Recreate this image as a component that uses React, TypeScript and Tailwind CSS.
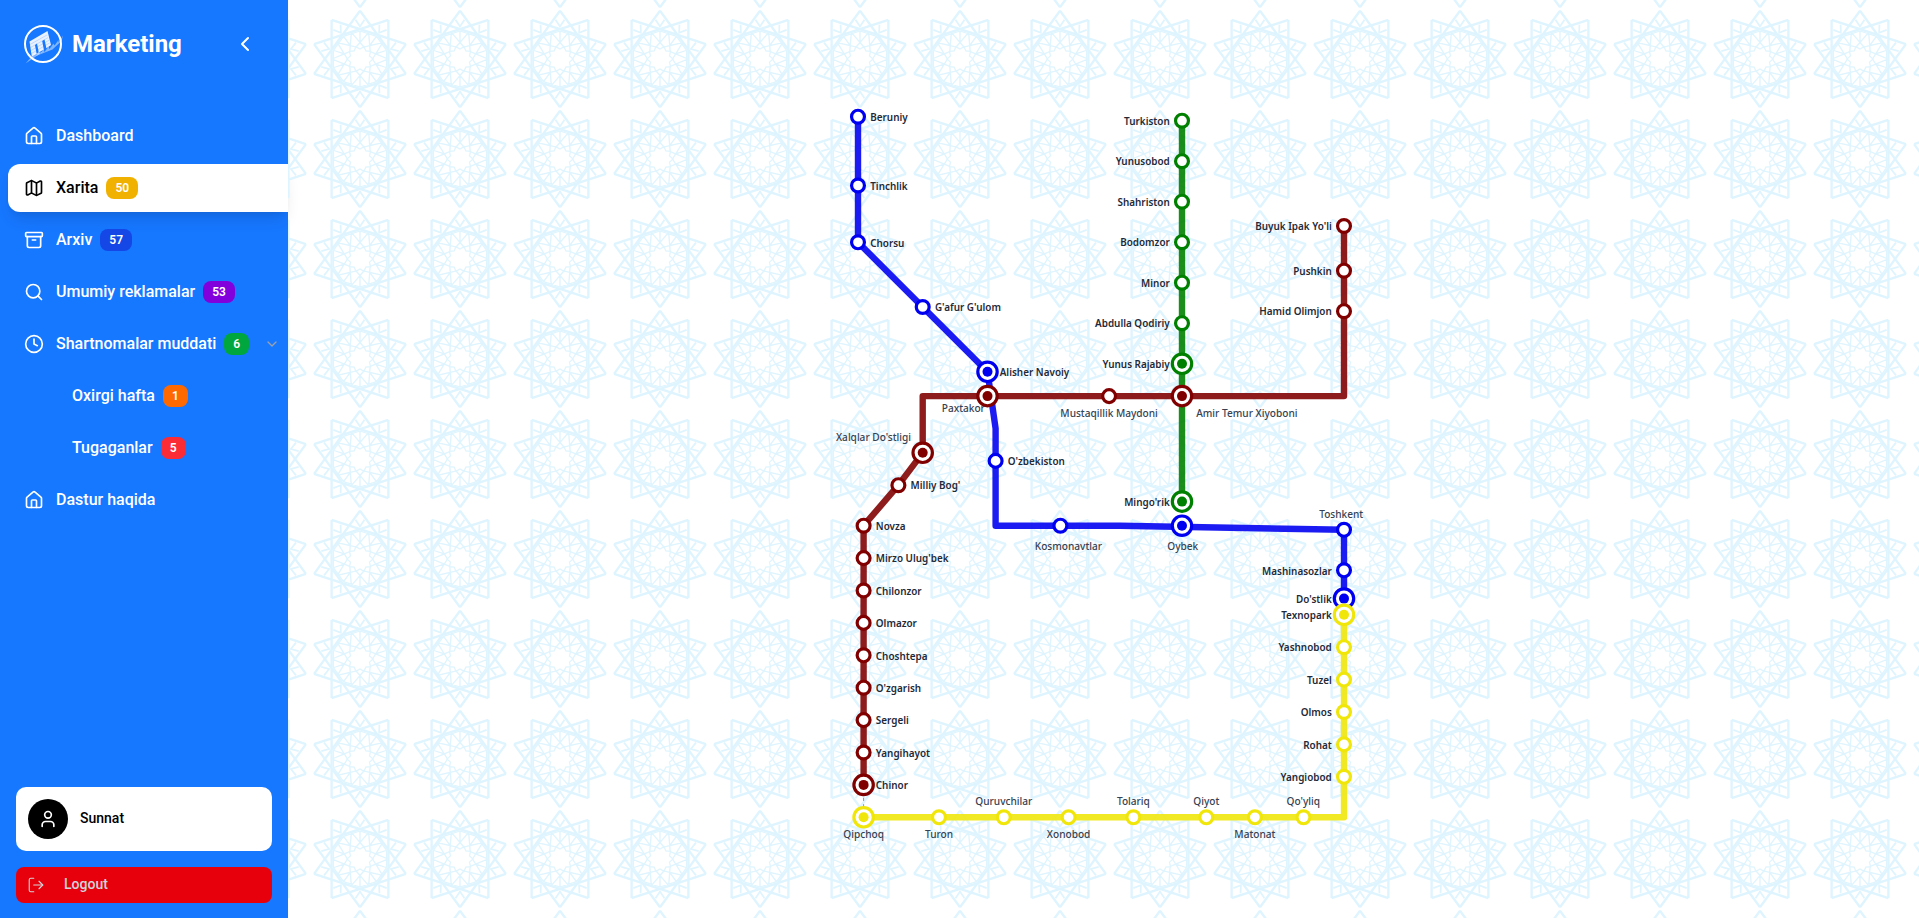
import type { ReactNode } from "react";
import { Archive, ChevronDown, ChevronLeft, Clock, House, LogOut, Map, Search, User } from "lucide-react";

const BLUE = "#0000f0";
const GREEN = "#008000";
const RED = "#800000";
const YELLOW = "#f0e60a";

type Side = "left" | "right";
type Station = {
  x: number;
  y: number;
  name: string;
  color: string;
  big?: boolean;
  side?: Side;
  label?: [number, number];
};

const stations: Station[] = [
  { x: 1182, y: 120.7, name: "Turkiston", color: GREEN, side: "left" },
  { x: 1182, y: 161.2, name: "Yunusobod", color: GREEN, side: "left" },
  { x: 1182, y: 201.7, name: "Shahriston", color: GREEN, side: "left" },
  { x: 1182, y: 242.2, name: "Bodomzor", color: GREEN, side: "left" },
  { x: 1182, y: 282.7, name: "Minor", color: GREEN, side: "left" },
  { x: 1182, y: 323.2, name: "Abdulla Qodiriy", color: GREEN, side: "left" },
  { x: 1182, y: 363.8, name: "Yunus Rajabiy", color: GREEN, side: "left", big: true },
  { x: 1182, y: 501.6, name: "Mingo'rik", color: GREEN, side: "left", big: true },
  { x: 858, y: 116.7, name: "Beruniy", color: BLUE, side: "right" },
  { x: 858, y: 185.5, name: "Tinchlik", color: BLUE, side: "right" },
  { x: 858, y: 242.3, name: "Chorsu", color: BLUE, side: "right" },
  { x: 922.7, y: 307, name: "G'afur G'ulom", color: BLUE, side: "right" },
  { x: 987.5, y: 371.8, name: "Alisher Navoiy", color: BLUE, side: "right", big: true },
  { x: 995.6, y: 460.9, name: "O'zbekiston", color: BLUE, side: "right" },
  { x: 1060.4, y: 525.7, name: "Kosmonavtlar", color: BLUE, label: [1068.4, 549.8] },
  { x: 1182, y: 525.7, name: "Oybek", color: BLUE, big: true, label: [1182.7, 549.8] },
  { x: 1344, y: 529.8, name: "Toshkent", color: BLUE, label: [1341.2, 517.6] },
  { x: 1344, y: 570.3, name: "Mashinasozlar", color: BLUE, side: "left" },
  { x: 1344, y: 598.6, name: "Do'stlik", color: BLUE, side: "left", big: true },
  { x: 1344, y: 226, name: "Buyuk Ipak Yo'li", color: RED, side: "left" },
  { x: 1344, y: 270.7, name: "Pushkin", color: RED, side: "left" },
  { x: 1344, y: 311.2, name: "Hamid Olimjon", color: RED, side: "left" },
  { x: 1182, y: 396.1, name: "Amir Temur Xiyoboni", color: RED, big: true, label: [1246.8, 416.5] },
  { x: 1109.1, y: 396.1, name: "Mustaqillik Maydoni", color: RED, label: [1109.1, 416.5] },
  { x: 987.5, y: 396.1, name: "Paxtakor", color: RED, big: true, label: [963.3, 412.4] },
  { x: 922.7, y: 452.8, name: "Xalqlar Do'stligi", color: RED, big: true, label: [873.5, 440.6] },
  { x: 898.4, y: 485.2, name: "Milliy Bog'", color: RED, side: "right" },
  { x: 863.6, y: 525.7, name: "Novza", color: RED, side: "right" },
  { x: 863.6, y: 558.1, name: "Mirzo Ulug'bek", color: RED, side: "right" },
  { x: 863.6, y: 590.5, name: "Chilonzor", color: RED, side: "right" },
  { x: 863.6, y: 622.9, name: "Olmazor", color: RED, side: "right" },
  { x: 863.6, y: 655.3, name: "Choshtepa", color: RED, side: "right" },
  { x: 863.6, y: 687.7, name: "O'zgarish", color: RED, side: "right" },
  { x: 863.6, y: 720.1, name: "Sergeli", color: RED, side: "right" },
  { x: 863.6, y: 752.5, name: "Yangihayot", color: RED, side: "right" },
  { x: 863.6, y: 784.9, name: "Chinor", color: RED, side: "right", big: true },
  { x: 1344, y: 614.8, name: "Texnopark", color: YELLOW, side: "left", big: true },
  { x: 1344, y: 647.2, name: "Yashnobod", color: YELLOW, side: "left" },
  { x: 1344, y: 679.6, name: "Tuzel", color: YELLOW, side: "left" },
  { x: 1344, y: 712, name: "Olmos", color: YELLOW, side: "left" },
  { x: 1344, y: 744.4, name: "Rohat", color: YELLOW, side: "left" },
  { x: 1344, y: 776.8, name: "Yangiobod", color: YELLOW, side: "left" },
  { x: 1303.5, y: 817.3, name: "Qo'yliq", color: YELLOW, label: [1303.3, 805] },
  { x: 1254.9, y: 817.3, name: "Matonat", color: YELLOW, label: [1254.9, 837.5] },
  { x: 1206.3, y: 817.3, name: "Qiyot", color: YELLOW, label: [1206.3, 805] },
  { x: 1133.4, y: 817.3, name: "Tolariq", color: YELLOW, label: [1133.4, 805] },
  { x: 1068.6, y: 817.3, name: "Xonobod", color: YELLOW, label: [1068.6, 837.5] },
  { x: 1003.8, y: 817.3, name: "Quruvchilar", color: YELLOW, label: [1003.8, 805] },
  { x: 939, y: 817.3, name: "Turon", color: YELLOW, label: [939, 837.5] },
  { x: 863.6, y: 817.3, name: "Qipchoq", color: YELLOW, big: true, label: [863.6, 837.5] },
];

const lines: [string, string][] = [
  [GREEN, "M1182 120.7V501.6"],
  [BLUE, "M858 116.7V242.3L987.5 371.8L995.6 428.5V525.7H1120L1344 529.8V598.6"],
  [RED, "M1344 226V396.1H922.7V452.8L898.4 485.2L863.6 525.7V784.9"],
  [YELLOW, "M1344 614.8V817.3H863.6"],
];

const polar = (r: number, deg: number) => {
  const a = (deg * Math.PI) / 180;
  return `${(r * Math.sin(a)).toFixed(2)} ${(-r * Math.cos(a)).toFixed(2)}`;
};

const tenfold = Array.from({ length: 10 }, (_, i) => i * 36);

/* Ten-pointed girih star, repeated every 100px. */
const outerStar = tenfold.map((a) => `M${polar(48.3, a)}L${polar(48.3, a + 108)}`).join("");
const tips = tenfold
  .map((a) => `M${polar(39.5, a - 6.5)}L${polar(32.5, a)}L${polar(39.5, a + 6.5)}`)
  .join("");
const petals = tenfold
  .map(
    (a) =>
      `M${polar(28, a - 18)}L${polar(16.5, a)}L${polar(28, a + 18)}` +
      `M${polar(16.5, a)}L${polar(27.5, a)}` +
      `M${polar(28, a)}L${polar(28, a + 36)}` +
      `M${polar(16.5, a)}L${polar(12.6, a + 18)}L${polar(16.5, a + 36)}`,
  )
  .join("");
const hole = `M${tenfold.map((a) => `${polar(10, a)}L${polar(13, a + 18)}`).join("L")}Z`;

function MetroMap() {
  return (
    <svg viewBox="288 0 1631 918" className="block h-full w-full">
      <defs>
        <pattern id="girih" x="310" y="9" width="100" height="100" patternUnits="userSpaceOnUse">
          <g transform="translate(50 50)" fill="none" stroke="#def4fe">
            <path d={petals} strokeWidth="1.3" />
            <path d={tips} strokeWidth="1.7" />
            <path d={outerStar} strokeWidth="2.3" />
            <path d={hole} fill="#ffffff" strokeWidth="1.2" />
          </g>
        </pattern>
      </defs>
      <rect x="288" y="0" width="1631" height="918" fill="url(#girih)" />
      <path d="M863.6 785V817" stroke="#888" strokeWidth="0.9" strokeDasharray="3.2 3.2" />
      {lines.map(([color, d]) => (
        <path
          key={color}
          d={d}
          fill="none"
          stroke={color}
          strokeWidth="6.4"
          strokeLinecap="round"
          strokeLinejoin="round"
          opacity="0.89"
        />
      ))}
      {stations.map((s) => {
        const x = s.label ? s.label[0] : s.side === "left" ? s.x - 12.2 : s.x + 12.2;
        const y = s.label ? s.label[1] : s.y + 4.2;
        return (
          <g key={s.name}>
            <text
              transform={`translate(${x} ${y}) scale(${s.label ? 0.936 : 0.917} 1)`}
              textAnchor={s.label ? "middle" : s.side === "left" ? "end" : "start"}
              fill={s.label ? "#374151" : "#1f2937"}
              className={
                s.label
                  ? "font-['Noto_Sans',sans-serif] text-[10.8px] font-medium"
                  : "font-['Noto_Sans',sans-serif] text-[10.8px] font-semibold"
              }
            >
              {s.name}
            </text>
            <circle cx={s.x} cy={s.y} r={s.big ? 9.7 : 6.45} fill="#ffffff" stroke={s.color} strokeWidth="3.2" />
            {s.big && <circle cx={s.x} cy={s.y} r="5" fill={s.color} />}
          </g>
        );
      })}
    </svg>
  );
}

function Badge({ color, children }: { color: string; children: ReactNode }) {
  return (
    <span
      className={`inline-flex items-center rounded-lg border border-transparent bg-clip-border px-2 py-0.5 text-xs font-semibold text-white ${color}`}
    >
      {children}
    </span>
  );
}

type ItemProps = {
  icon?: ReactNode;
  label: string;
  badge?: string;
  badgeColor?: string;
  active?: boolean;
  expandable?: boolean;
};

function NavItem({ icon, label, badge, badgeColor = "", active, expandable }: ItemProps) {
  return (
    <li
      className={`flex h-12 items-center rounded-l-xl pr-2 ${icon ? "pl-4" : "pl-16"} ${
        active ? "bg-white text-black shadow-lg" : "text-white"
      }`}
    >
      {icon && <span className="mr-3 flex size-5 shrink-0">{icon}</span>}
      <span className="mr-2 text-base font-medium whitespace-nowrap">{label}</span>
      {badge && <Badge color={badgeColor}>{badge}</Badge>}
      {expandable && <ChevronDown size={16} className="ml-auto text-gray-400" />}
    </li>
  );
}

function Logo() {
  return (
    <svg width="42" height="40" viewBox="0 0 42 40" fill="none" className="-mr-0.5">
      <path d="m2.5 39.500 9-10 8-1.500Z" fill="#fff" opacity=".45" />
      <path d="m13 32 3-5 1 3 3.500-5 1 3 4-5.500 1 2.500 4-5.500 1 2 4-5.500 0 2.500 4.500-7-1.500 5.500-9 8.500Z" fill="#fff" opacity=".45" />
      <path d="M6.500 17.500 24.500 7 28 21 23.400 24.200 21.500 15.500 19.200 17 20.800 25.600 15.800 28.400 14 19.600 12 21 13.600 29.800 8.800 32.500Z" fill="#fff" opacity=".9" />
      <path d="M7 20.500 24 11M7.500 23.500 25 13.700M8 26.500l18-10.200M8.500 29.500l18-10.500" stroke="#1677ff" strokeWidth=".6" opacity=".35" />
      <circle cx="20" cy="20" r="18" stroke="#fff" strokeWidth="2" />
    </svg>
  );
}

function Sidebar() {
  return (
    <aside className="flex h-full w-72 shrink-0 flex-col bg-[#1677ff] font-[Roboto,sans-serif]">
      <header className="flex h-[88px] items-center pl-[23px]">
        <Logo />
        <h1 className="ml-[9px] text-2xl font-bold text-white">Marketing</h1>
        <ChevronLeft size={24} className="mr-[31px] ml-auto text-white" />
      </header>
      <ul className="mt-6 flex flex-col gap-1 pl-2">
        <NavItem icon={<House size={20} />} label="Dashboard" />
        <NavItem icon={<Map size={20} />} label="Xarita" badge="50" badgeColor="bg-yellow-500" active />
        <NavItem icon={<Archive size={20} />} label="Arxiv" badge="57" badgeColor="bg-blue-700" />
        <NavItem icon={<Search size={20} />} label="Umumiy reklamalar" badge="53" badgeColor="bg-purple-700" />
        <NavItem icon={<Clock size={20} />} label="Shartnomalar muddati" badge="6" badgeColor="bg-green-600" expandable />
        <NavItem label="Oxirgi hafta" badge="1" badgeColor="bg-orange-500" />
        <NavItem label="Tugaganlar" badge="5" badgeColor="bg-red-500" />
        <NavItem icon={<House size={20} />} label="Dastur haqida" />
      </ul>
      <div className="mt-auto flex flex-col gap-4 px-4 pb-[15px]">
        <div className="flex h-16 items-center gap-3 rounded-[10px] bg-white px-3">
          <span className="flex size-10 items-center justify-center rounded-full bg-black text-white">
            <User size={20} />
          </span>
          <span className="pb-0.5 text-sm font-medium text-black">Sunnat</span>
        </div>
        <button className="flex h-9 items-center rounded-lg bg-red-600 pl-[11px] text-sm font-medium text-gray-300">
          <LogOut size={18} strokeWidth={1.5} />
          <span className="ml-[19px] pb-0.5">Logout</span>
        </button>
      </div>
    </aside>
  );
}

export default function App() {
  return (
    <div className="flex h-screen w-full overflow-hidden bg-white">
      <Sidebar />
      <main className="h-full min-w-0 flex-1">
        <MetroMap />
      </main>
    </div>
  );
}
